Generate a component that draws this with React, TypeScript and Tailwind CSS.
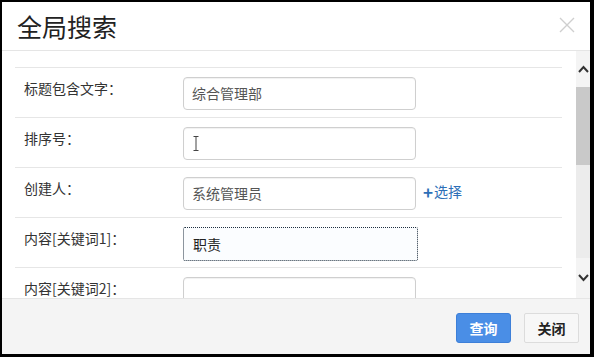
import React from 'react';

const font = { fontFamily: '"Noto Sans CJK SC", "Liberation Sans", sans-serif' };

interface RowProps {
  label: string;
  children: React.ReactNode;
}

function Row({ label, children }: RowProps) {
  return (
    <div className="flex h-[50px] border-b border-[#e6e6e6]">
      <div className="w-[168px] shrink-0 pl-[9px] pt-[10px] text-[14px] leading-[20px] text-[#333]">{label}</div>
      <div className="flex items-start pt-[9px]">{children}</div>
    </div>
  );
}

function TextBox({ value, focused }: { value?: string; focused?: boolean }) {
  return (
    <div
      className={
        focused
          ? 'flex h-[34px] w-[235px] items-center rounded-[2px] border border-dotted border-[#1f2f3f] bg-[#fbfdff] px-[9px] text-[14px] text-[#222]'
          : 'flex h-[33px] w-[233px] items-center rounded-[4px] border border-[#cfcfcf] bg-white px-[8px] text-[14px] text-[#555] shadow-[inset_0_1px_1px_rgba(0,0,0,0.06)]'
      }
    >
      {value}
    </div>
  );
}

export default function App() {
  return (
    <div className="h-[357px] w-[594px] bg-black pl-[2px] pt-[2px]" style={font}>
      <div className="flex h-[352px] w-[588px] flex-col bg-white">
        {/* header */}
        <div className="flex h-[49px] shrink-0 items-center justify-between border-b border-[#e5e5e5] pl-[15px] pr-[15px]">
          <span className="text-[25px] font-normal leading-none text-[#222]">全局搜索</span>
          <svg width="16" height="16" viewBox="0 0 16 16" className="mb-[2px]">
            <path d="M1 1L15 15M15 1L1 15" stroke="#cfcfcf" strokeWidth="1.4" />
          </svg>
        </div>

        {/* body */}
        <div className="flex h-[247px] shrink-0">
          <div className="flex-1 overflow-hidden pl-[13px] pr-[14px] pt-[16px]">
            <div className="border-t border-[#e6e6e6]">
              <Row label="标题包含文字：">
                <TextBox value="综合管理部" />
              </Row>
              <Row label="排序号：">
                <div className="flex h-[33px] w-[233px] items-center rounded-[4px] border border-[#cfcfcf] bg-white px-[9px] shadow-[inset_0_1px_1px_rgba(0,0,0,0.06)]">
                  <svg width="6" height="15" viewBox="0 0 6 15">
                    <path d="M0.5 0.5H5.5M3 0.5V14.5M0.5 14.5H5.5" stroke="#444" strokeWidth="1" fill="none" />
                  </svg>
                </div>
              </Row>
              <Row label="创建人：">
                <TextBox value="系统管理员" />
                <span className="ml-[7px] mt-[4px] flex items-center text-[14px] text-[#2d6fb7]">
                  <span className="mr-[1px] text-[17px] font-bold leading-none">+</span>选择
                </span>
              </Row>
              <Row label="内容[关键词1]：">
                <TextBox value="职责" focused />
              </Row>
              <Row label="内容[关键词2]：">
                <TextBox />
              </Row>
            </div>
          </div>
          {/* scrollbar */}
          <div className="flex w-[14px] shrink-0 flex-col bg-[#ececec]">
            <div className="flex h-[36px] items-center justify-center bg-[#f4f4f4]">
              <svg width="11" height="8" viewBox="0 0 11 8">
                <path d="M1 7L5.5 2L10 7" stroke="#333" strokeWidth="2" fill="none" />
              </svg>
            </div>
            <div className="h-[78px] bg-[#c9c9c9]" />
            <div className="flex-1" />
            <div className="flex h-[40px] items-center justify-center bg-[#f4f4f4]">
              <svg width="11" height="8" viewBox="0 0 11 8">
                <path d="M1 1L5.5 6L10 1" stroke="#333" strokeWidth="2" fill="none" />
              </svg>
            </div>
          </div>
        </div>

        {/* footer */}
        <div className="flex flex-1 items-start justify-end gap-[13px] border-t border-[#e5e5e5] bg-[#f4f4f4] pr-[11px] pt-[14px]">
          <button className="h-[30px] w-[55px] rounded-[3px] border border-[#3d7fd8] bg-[#4a8ee6] text-[14px] font-bold text-white">
            查询
          </button>
          <button className="h-[30px] w-[55px] rounded-[2px] border border-[#dcdcdc] bg-[#f7f7f7] text-[14px] font-bold text-[#222]">
            关闭
          </button>
        </div>
      </div>
    </div>
  );
}
